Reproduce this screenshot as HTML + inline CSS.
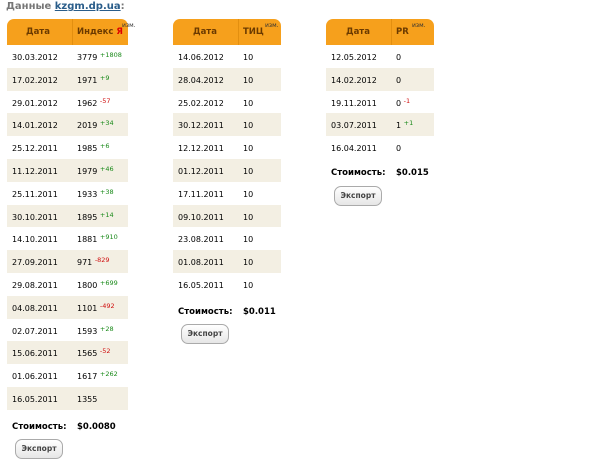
<!DOCTYPE html>
<html><head><meta charset="utf-8"><style>
body{margin:0;width:600px;height:456px;background:#fff;font-family:"DejaVu Sans",Verdana,"Liberation Sans",sans-serif;font-size:8px;color:#000;position:relative;overflow:hidden}
.t{position:absolute;top:19px}
.h{height:26px;background:#f6a01c;border-radius:7px 7px 0 0;position:relative;font-weight:bold;color:#6b3a00;font-size:8.5px;white-space:nowrap}
.h span{position:absolute;top:8px}
.h .sep{position:absolute;top:0;bottom:0;width:1px;background:#e38f10}
.r{height:22.8px;position:relative;white-space:nowrap}
.r:nth-child(even){background:#f3efe3}
.r span{position:absolute;top:8px}
sup{font-size:6.5px;position:relative;top:-2px;vertical-align:top}
.g{color:#1a8a1a}.re{color:#d01010}
.cost{position:absolute;font-weight:bold;font-size:8.5px}
.btn{position:absolute;width:46px;height:18px;border:1px solid #aaa;border-radius:7px;background:linear-gradient(#fff,#e6e6e6);font-weight:bold;font-size:7.5px;color:#444;text-align:center;line-height:18px}
</style></head><body>
<div style="position:absolute;left:6px;top:1px;font-size:10px;font-weight:bold;color:#777">Данные <span style="color:#2a5d8a;text-decoration:underline">kzgm.dp.ua</span>:</div>

<div class="t" style="left:7px;width:121px">
<div class="h"><span style="left:19px">Дата</span><div class="sep" style="left:65px"></div><span style="left:70px">Индекс <span style="color:#d00;position:static">Я</span></span><span style="left:115px;top:3px;font-size:6px;font-weight:normal;color:#333">изм.</span></div>
<div>
<div class="r"><span style="left:5px">30.03.2012</span><span style="left:70px">3779 <sup class="g">+1808</sup></span></div>
<div class="r"><span style="left:5px">17.02.2012</span><span style="left:70px">1971 <sup class="g">+9</sup></span></div>
<div class="r"><span style="left:5px">29.01.2012</span><span style="left:70px">1962 <sup class="re">-57</sup></span></div>
<div class="r"><span style="left:5px">14.01.2012</span><span style="left:70px">2019 <sup class="g">+34</sup></span></div>
<div class="r"><span style="left:5px">25.12.2011</span><span style="left:70px">1985 <sup class="g">+6</sup></span></div>
<div class="r"><span style="left:5px">11.12.2011</span><span style="left:70px">1979 <sup class="g">+46</sup></span></div>
<div class="r"><span style="left:5px">25.11.2011</span><span style="left:70px">1933 <sup class="g">+38</sup></span></div>
<div class="r"><span style="left:5px">30.10.2011</span><span style="left:70px">1895 <sup class="g">+14</sup></span></div>
<div class="r"><span style="left:5px">14.10.2011</span><span style="left:70px">1881 <sup class="g">+910</sup></span></div>
<div class="r"><span style="left:5px">27.09.2011</span><span style="left:70px">971 <sup class="re">-829</sup></span></div>
<div class="r"><span style="left:5px">29.08.2011</span><span style="left:70px">1800 <sup class="g">+699</sup></span></div>
<div class="r"><span style="left:5px">04.08.2011</span><span style="left:70px">1101 <sup class="re">-492</sup></span></div>
<div class="r"><span style="left:5px">02.07.2011</span><span style="left:70px">1593 <sup class="g">+28</sup></span></div>
<div class="r"><span style="left:5px">15.06.2011</span><span style="left:70px">1565 <sup class="re">-52</sup></span></div>
<div class="r"><span style="left:5px">01.06.2011</span><span style="left:70px">1617 <sup class="g">+262</sup></span></div>
<div class="r"><span style="left:5px">16.05.2011</span><span style="left:70px">1355</span></div>
</div></div>
<div class="cost" style="left:12px;top:422px">Стоимость:</div>
<div class="cost" style="left:77px;top:422px">$0.0080</div>
<div class="btn" style="left:15px;top:439px">Экспорт</div>

<div class="t" style="left:173px;width:108px">
<div class="h"><span style="left:20px">Дата</span><div class="sep" style="left:65px"></div><span style="left:70px">ТИЦ</span><span style="left:92px;top:3px;font-size:6px;font-weight:normal;color:#333">изм.</span></div>
<div>
<div class="r"><span style="left:5px">14.06.2012</span><span style="left:70px">10</span></div>
<div class="r"><span style="left:5px">28.04.2012</span><span style="left:70px">10</span></div>
<div class="r"><span style="left:5px">25.02.2012</span><span style="left:70px">10</span></div>
<div class="r"><span style="left:5px">30.12.2011</span><span style="left:70px">10</span></div>
<div class="r"><span style="left:5px">12.12.2011</span><span style="left:70px">10</span></div>
<div class="r"><span style="left:5px">01.12.2011</span><span style="left:70px">10</span></div>
<div class="r"><span style="left:5px">17.11.2011</span><span style="left:70px">10</span></div>
<div class="r"><span style="left:5px">09.10.2011</span><span style="left:70px">10</span></div>
<div class="r"><span style="left:5px">23.08.2011</span><span style="left:70px">10</span></div>
<div class="r"><span style="left:5px">01.08.2011</span><span style="left:70px">10</span></div>
<div class="r"><span style="left:5px">16.05.2011</span><span style="left:70px">10</span></div>
</div></div>
<div class="cost" style="left:178px;top:307px">Стоимость:</div>
<div class="cost" style="left:243px;top:307px">$0.011</div>
<div class="btn" style="left:181px;top:324px">Экспорт</div>

<div class="t" style="left:326px;width:108px">
<div class="h"><span style="left:20px">Дата</span><div class="sep" style="left:65px"></div><span style="left:70px">PR</span><span style="left:86px;top:3px;font-size:6px;font-weight:normal;color:#333">изм.</span></div>
<div>
<div class="r"><span style="left:5px">12.05.2012</span><span style="left:70px">0</span></div>
<div class="r"><span style="left:5px">14.02.2012</span><span style="left:70px">0</span></div>
<div class="r"><span style="left:5px">19.11.2011</span><span style="left:70px">0 <sup class="re">-1</sup></span></div>
<div class="r"><span style="left:5px">03.07.2011</span><span style="left:70px">1 <sup class="g">+1</sup></span></div>
<div class="r"><span style="left:5px">16.04.2011</span><span style="left:70px">0</span></div>
</div></div>
<div class="cost" style="left:331px;top:168px">Стоимость:</div>
<div class="cost" style="left:396px;top:168px">$0.015</div>
<div class="btn" style="left:334px;top:186px">Экспорт</div>
</body></html>
